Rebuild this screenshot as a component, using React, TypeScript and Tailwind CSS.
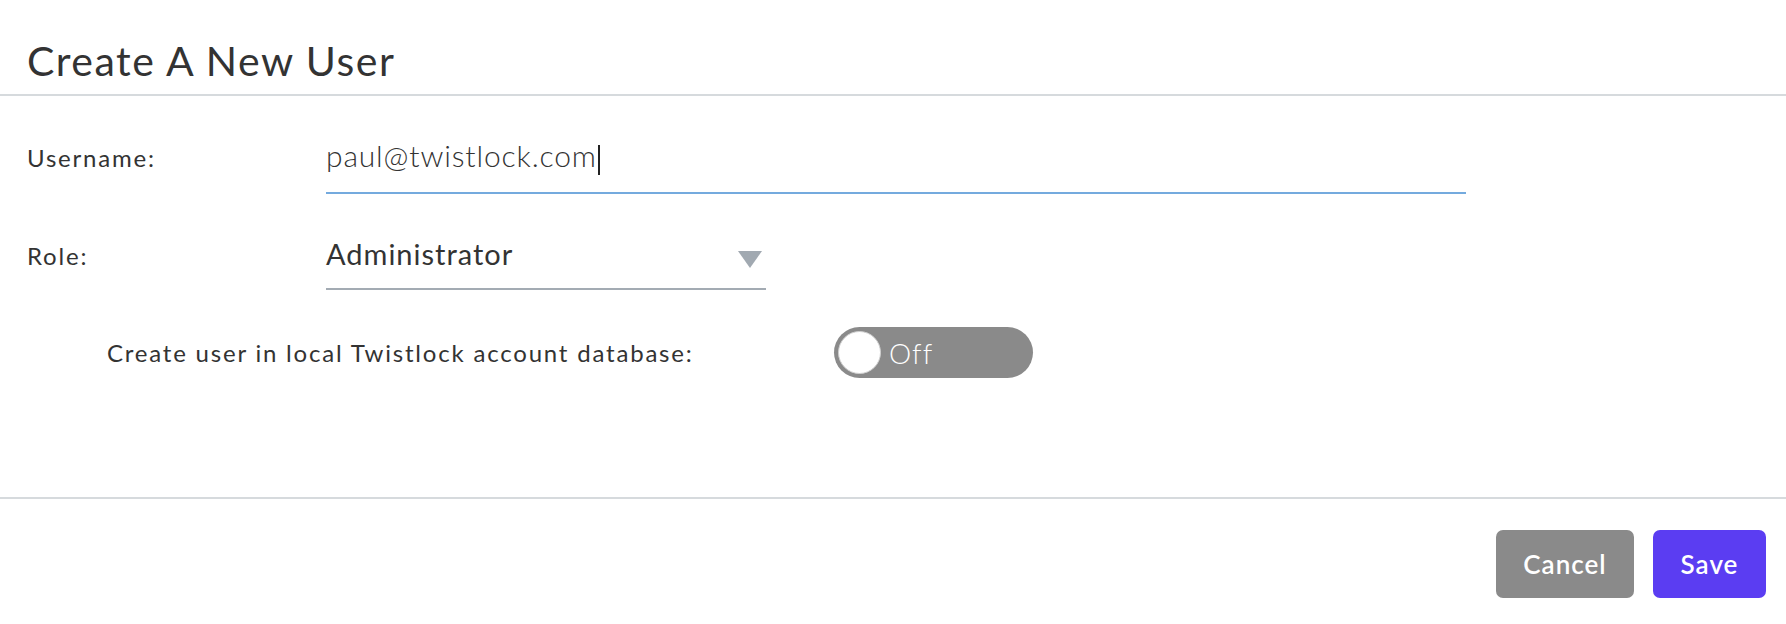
import React from "react";

export default function App() {
  return (
    <div
      className="w-[1786px] h-[624px] bg-white flex flex-col text-[#333333]"
      style={{ fontFamily: "Lato, 'Liberation Sans', sans-serif" }}
    >
      <div className="h-[96px] shrink-0 border-b-2 border-[#d6dadd] pl-[27px] pt-[40px]">
        <h1 className="text-[41px] leading-none font-normal tracking-[1.5px]">Create A New User</h1>
      </div>

      <div className="flex-1 pl-[27px] pt-[46px]">
        <div className="flex items-baseline">
          <div className="w-[299px] text-[24px] leading-[24px] tracking-[1.8px]">Username:</div>
          <div className="w-[1140px] border-b-2 border-[#74aade] pb-[17px] text-[30px] leading-[26px] font-light tracking-[0.85px]">
            <span>paul@twistlock.com</span>
            <span className="inline-block w-[2px] h-[30px] bg-[#222] ml-[1px] align-[-8px]" />
          </div>
        </div>

        <div className="flex items-baseline mt-[47px]">
          <div className="w-[299px] text-[24px] leading-[24px] tracking-[1.8px]">Role:</div>
          <div className="w-[440px] border-b-2 border-[#a3abb3] pb-[20px] flex items-start justify-between">
            <span className="text-[29px] leading-[26px] tracking-[1px]">Administrator</span>
            <svg width="24" height="17" viewBox="0 0 24 17" className="mt-[10px] mr-[4px]">
              <polygon points="0,0 24,0 12,17" fill="#a1a9b1" />
            </svg>
          </div>
        </div>

        <div className="flex items-center mt-[37px] pl-[80px]">
          <div className="w-[727px] text-[24px] leading-[24px] tracking-[1.8px]">
            Create user in local Twistlock account database:
          </div>
          <div className="w-[199px] h-[51px] rounded-full bg-[#8a8a8a] flex items-center">
            <div className="w-[43px] h-[43px] rounded-full bg-white ml-[4px] border border-[#d0d0d0]" />
            <span className="ml-[8px] text-[28px] leading-none font-light tracking-[1px] text-white">Off</span>
          </div>
        </div>
      </div>

      <div className="shrink-0 border-t-2 border-[#d6dadd] pt-[31px] pb-[26px] pr-[20px] flex justify-end gap-[19px]">
        <button className="w-[138px] h-[68px] rounded-[7px] bg-[#8a8a8a] text-white text-[26px] font-semibold tracking-[1px]">
          Cancel
        </button>
        <button className="w-[113px] h-[68px] rounded-[7px] bg-[#5b3df2] text-white text-[26px] font-semibold tracking-[1px]">
          Save
        </button>
      </div>
    </div>
  );
}
